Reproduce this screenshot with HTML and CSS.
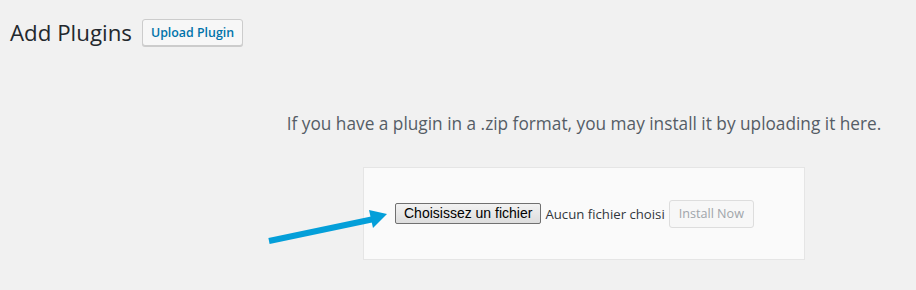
FILE: index.html
```html
<!DOCTYPE html>
<html>
<head>
    <meta charset="UTF-8">
    <title>Add Plugins</title>
    <link rel="stylesheet" href="styles.css">
</head>
<body>

<div class="wrap">
    <div class="page-head">
        <h1 class="page-title">Add Plugins</h1>
        <a href="javascript:;" class="upload-btn">Upload Plugin</a>
    </div>

    <div class="upload-plugin">
        <p class="install-help">If you have a plugin in a .zip format, you may install it by uploading it here.</p>
        <form class="upload-form">
            <span class="file-btn">Choisissez un fichier</span>
            <span class="file-name">Aucun fichier choisi</span>
            <span class="install-btn">Install Now</span>
        </form>
        <svg class="arrow" width="130" height="44" viewBox="0 0 130 44">
            <line x1="3" y1="39" x2="108" y2="17" stroke="#049fd9" stroke-width="6"/>
            <polygon points="121,12 103,8 107,26" fill="#049fd9"/>
        </svg>
    </div>
</div>

</body>
</html>
```

FILE: styles.css
```css
*{ margin: 0; padding: 0; box-sizing: border-box;}
body { background: #f1f1f1; font-family: "Open Sans", "Noto Sans", sans-serif; color: #23282d;}
.wrap { padding: 0 10px; height: 290px;}
.page-head { display: flex; align-items: center; padding-top: 19px; height: 46px;}
.page-title { font-size: 22.3px; font-weight: 400; line-height: 29px; margin-right: 10px;}
.upload-btn { display: block; height: 27px; line-height: 25px; padding: 0 8px; font-size: 12.4px; font-weight: 600; color: #0073aa; text-decoration: none; background: #f7f7f7; border: 1px solid #ccc; border-radius: 3px; box-shadow: 0 1px 0 #ccc;}
.upload-plugin { position: relative; padding-left: 242px;}
.install-help { text-align: center; font-size: 17.25px; color: #555d66; line-height: 24px; padding-top: 66px; width: 664px;}
.upload-form { display: flex; align-items: center; margin: 31px 0 0 111px; width: 442px; height: 93px; padding: 0 0 0 31px; background: #fafafa; border: 1px solid #e5e5e5;}
.file-btn { font-family: "Liberation Sans", Arial, sans-serif; font-size: 14px; color: #000; height: 21px; line-height: 19px; padding: 0 8px; border: 1px solid #707070; border-radius: 2px; background: linear-gradient(#f2f2f2, #dddddd);}
.file-name { font-size: 13.2px; color: #32373c; margin: 0 4px;}
.install-btn { height: 28px; line-height: 26px; padding: 0 9px; font-size: 12.6px; color: #a0a5aa; background: #f7f7f7; border: 1px solid #ddd; border-radius: 3px;}
.arrow { position: absolute; left: 256px; top: 156px;}
```
